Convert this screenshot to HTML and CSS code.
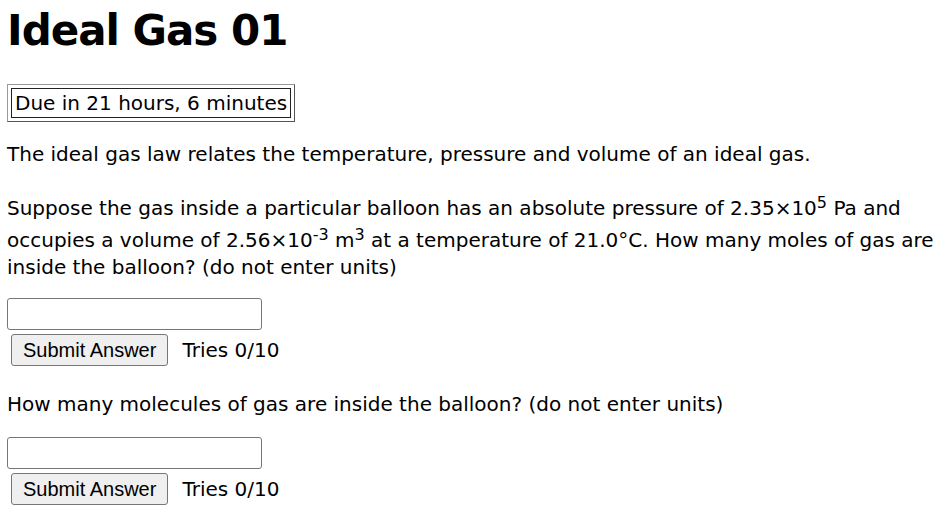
FILE: index.html
```html
<!DOCTYPE html>
<html lang="en">
<head>
    <meta charset="UTF-8">
    <meta name="viewport" content="width=device-width, initial-scale=1.0">
    <title>Ideal Gas 01</title>
    <link rel="stylesheet" href="styles.css">
</head>
<body>
    <h1>Ideal Gas 01</h1>

    <div class="due-box">
        <div class="due-cell">Due in 21 hours, 6 minutes</div>
    </div>

    <p class="intro">The ideal gas law relates the temperature, pressure and volume of an ideal gas.</p>

    <p class="question first">Suppose the gas inside a particular balloon has an absolute pressure of 2.35&times;10<sup>5</sup> Pa and occupies a volume of 2.56&times;10<sup>-3</sup> m<sup>3</sup> at a temperature of 21.0&deg;C. How many moles of gas are inside the balloon? (do not enter units)</p>

    <div class="answer">
        <input type="text" class="answer-input">
        <div class="submit-row">
            <button class="submit-button">Submit Answer</button>
            <span class="tries">Tries 0/10</span>
        </div>
    </div>

    <p class="question second">How many molecules of gas are inside the balloon? (do not enter units)</p>

    <div class="answer">
        <input type="text" class="answer-input">
        <div class="submit-row">
            <button class="submit-button">Submit Answer</button>
            <span class="tries">Tries 0/10</span>
        </div>
    </div>
</body>
</html>
```

FILE: styles.css
```css
body {
    font-family: "DejaVu Sans", Verdana, sans-serif;
    font-size: 20px;
    line-height: 27px;
    color: #000;
    background-color: #fff;
    margin: 0;
    padding: 5px 7px 0 7px;
}
h1 {
    font-size: 42px;
    line-height: 52px;
    letter-spacing: -1px;
    font-weight: bold;
    margin: 0 0 27px 0;
}
.due-box {
    display: inline-block;
    padding: 3px;
    border: 1px solid;
    border-color: #9a9a9a #555 #555 #9a9a9a;
}
.due-cell {
    border: 1px solid #222;
    padding: 2px 3px;
    line-height: 24px;
}
.intro {
    margin: 19px 0 0 0;
}
.question {
    margin: 0;
}
.question.first {
    margin-top: 22px;
}
.question.second {
    margin-top: 25px;
}
sup {
    font-size: 16px;
    line-height: 26px;
    vertical-align: 7px;
}
.answer {
    margin-top: 17px;
}
.question.second + .answer {
    margin-top: 19px;
}
.answer-input {
    display: block;
    box-sizing: border-box;
    width: 255px;
    height: 32px;
    margin: 0;
    border: 1px solid #767676;
    border-radius: 3px;
    font-size: 20px;
}
.submit-row {
    display: flex;
    align-items: center;
    margin-top: 4px;
}
.submit-button {
    box-sizing: border-box;
    height: 32px;
    margin: 0 14px 0 4px;
    padding: 0 11px;
    font-family: "Liberation Sans", Arial, sans-serif;
    font-size: 20px;
    background-color: #efefef;
    border: 1px solid #767676;
    border-radius: 3px;
    color: #000;
}
```
